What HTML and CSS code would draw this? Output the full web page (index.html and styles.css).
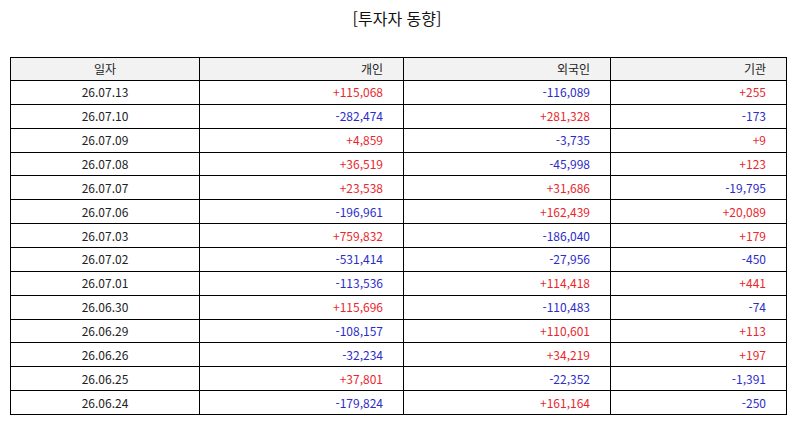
FILE: index.html
```html
<!DOCTYPE html>
<html lang="ko">
<head>
<meta charset="utf-8">
<title>투자자 동향</title>
<link rel="stylesheet" href="styles.css">
</head>
<body>
<h1 class="title">[투자자 동향]</h1>
<table class="grid">
  <colgroup>
    <col class="c1"><col class="c2"><col class="c3"><col class="c4">
  </colgroup>
  <thead>
    <tr><th class="date">일자</th><th>개인</th><th>외국인</th><th>기관</th></tr>
  </thead>
  <tbody>
    <tr><td class="date">26.07.13</td><td class="up">+115,068</td><td class="dn">-116,089</td><td class="up">+255</td></tr>
    <tr><td class="date">26.07.10</td><td class="dn">-282,474</td><td class="up">+281,328</td><td class="dn">-173</td></tr>
    <tr><td class="date">26.07.09</td><td class="up">+4,859</td><td class="dn">-3,735</td><td class="up">+9</td></tr>
    <tr><td class="date">26.07.08</td><td class="up">+36,519</td><td class="dn">-45,998</td><td class="up">+123</td></tr>
    <tr><td class="date">26.07.07</td><td class="up">+23,538</td><td class="up">+31,686</td><td class="dn">-19,795</td></tr>
    <tr><td class="date">26.07.06</td><td class="dn">-196,961</td><td class="up">+162,439</td><td class="up">+20,089</td></tr>
    <tr><td class="date">26.07.03</td><td class="up">+759,832</td><td class="dn">-186,040</td><td class="up">+179</td></tr>
    <tr><td class="date">26.07.02</td><td class="dn">-531,414</td><td class="dn">-27,956</td><td class="dn">-450</td></tr>
    <tr><td class="date">26.07.01</td><td class="dn">-113,536</td><td class="up">+114,418</td><td class="up">+441</td></tr>
    <tr><td class="date">26.06.30</td><td class="up">+115,696</td><td class="dn">-110,483</td><td class="dn">-74</td></tr>
    <tr><td class="date">26.06.29</td><td class="dn">-108,157</td><td class="up">+110,601</td><td class="up">+113</td></tr>
    <tr><td class="date">26.06.26</td><td class="dn">-32,234</td><td class="up">+34,219</td><td class="up">+197</td></tr>
    <tr><td class="date">26.06.25</td><td class="up">+37,801</td><td class="dn">-22,352</td><td class="dn">-1,391</td></tr>
    <tr><td class="date">26.06.24</td><td class="dn">-179,824</td><td class="up">+161,164</td><td class="dn">-250</td></tr>
  </tbody>
</table>
</body>
</html>
```
FILE: styles.css
```css
html, body {
  margin: 0;
  padding: 0;
  background: #fff;
}
body {
  font-family: "Noto Sans CJK KR", "Noto Sans", sans-serif;
  color: #222;
}
.title {
  margin: 0;
  padding-top: 6px;
  height: 57px;
  box-sizing: border-box;
  text-align: center;
  font-size: 16px;
  font-weight: normal;
  line-height: 24px;
  color: #111;
}
.grid {
  margin-left: 10px;
  width: 776px;
  border-collapse: collapse;
  table-layout: fixed;
  font-size: 12px;
}
.c1 { width: 189px; }
.c2 { width: 204px; }
.c3 { width: 207px; }
.c4 { width: 176px; }
.grid th,
.grid td {
  border: 1.5px solid #000;
  padding: 0 20px 0 0;
  text-align: right;
  font-weight: normal;
  line-height: 14px;
  white-space: nowrap;
}
.grid th {
  height: 22px;
  background: #f2f2f2;
  color: #222;
}
.grid td {
  height: 22.86px;
}
.grid .date {
  text-align: center;
  padding: 0;
}
.up { color: #e8282e; }
.dn { color: #2c2cc8; }
```
